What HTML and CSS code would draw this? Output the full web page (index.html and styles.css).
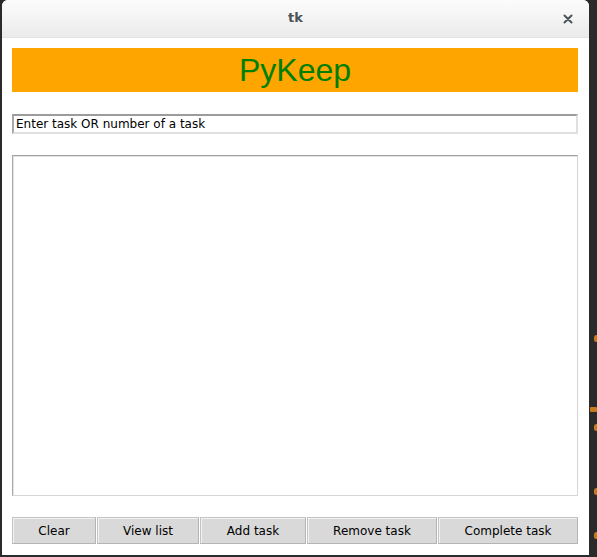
FILE: index.html
```html
<!DOCTYPE html>
<html>
<head>
<meta charset="utf-8">
<link rel="stylesheet" href="styles.css">
</head>
<body>
<div class="desk">
  <div class="window">
    <div class="titlebar">
      <span class="title">tk</span>
      <span class="close">
        <svg width="10" height="10" viewBox="0 0 10 10"><path d="M1.5 1.5 L8.5 8.5 M8.5 1.5 L1.5 8.5" stroke="#4a5559" stroke-width="2" stroke-linecap="round"/></svg>
      </span>
    </div>
    <div class="content">
      <div class="banner">PyKeep</div>
      <div class="entry">Enter task OR number of a task</div>
      <div class="listbox"></div>
      <div class="buttons">
        <div class="btn">Clear</div>
        <div class="btn">View list</div>
        <div class="btn">Add task</div>
        <div class="btn">Remove task</div>
        <div class="btn">Complete task</div>
      </div>
    </div>
  </div>
  <span class="dot d1"></span>
  <span class="dot d2"></span>
  <span class="dot d3"></span>
  <span class="dot d4"></span>
  <span class="dot d5"></span>
</div>
</body>
</html>
```
FILE: styles.css
```css
html, body {
  margin: 0;
  padding: 0;
  background: #2b2b2b;
}
.desk {
  position: relative;
  width: 597px;
  height: 557px;
  overflow: hidden;
  background: #2a2a2a;
}
.window {
  margin-left: 2px;
  width: 587px;
  height: 555px;
  background: #ffffff;
  border-radius: 6px 6px 0 0;
  display: flex;
  flex-direction: column;
}
.titlebar {
  height: 38px;
  box-sizing: border-box;
  background: linear-gradient(#fcfcfc, #ebebeb);
  border-radius: 6px 6px 0 0;
  border-bottom: 1px solid #e2e2e2;
  display: flex;
  align-items: center;
  justify-content: center;
  position: relative;
}
.title {
  font-family: "DejaVu Sans", sans-serif;
  font-weight: bold;
  font-size: 13px;
  color: #4a5458;
  margin-top: -2px;
}
.close {
  position: absolute;
  right: 16px;
  top: 14px;
  width: 10px;
  height: 10px;
  display: block;
}
.close svg { display: block; }
.content {
  padding: 10px 11px 0 10px;
  display: flex;
  flex-direction: column;
}
.banner {
  height: 44px;
  background: #ffa500;
  color: #008000;
  font-family: "Liberation Sans", Arial, sans-serif;
  font-size: 32px;
  line-height: 44px;
  text-align: center;
}
.entry {
  margin-top: 22px;
  height: 20px;
  box-sizing: border-box;
  border: 2px solid;
  border-color: #9c9c9c #e0e0e0 #e0e0e0 #a8a8a8;
  font-family: "DejaVu Sans", sans-serif;
  font-size: 12px;
  line-height: 16px;
  padding-left: 2px;
  color: #000;
}
.listbox {
  margin-top: 21px;
  height: 341px;
  box-sizing: border-box;
  border: 1px solid;
  border-color: #a0a0a0 #d6d6d6 #d6d6d6 #a8a8a8;
  box-shadow: inset 1px 1px 0 #e4e4e4;
}
.buttons {
  margin-top: 21px;
  display: grid;
  grid-template-columns: 84px 102px 106px 130px 140px;
  column-gap: 1px;
}
.btn {
  height: 27px;
  box-sizing: border-box;
  background: #d9d9d9;
  border: 1px solid;
  border-color: #c4c4c4 #b4b4b4 #b4b4b4 #c4c4c4;
  box-shadow: inset 1px 1px 0 #f2f2f2;
  font-family: "DejaVu Sans", sans-serif;
  font-size: 12px;
  line-height: 26px;
  text-align: center;
  color: #000;
}
.dot {
  position: absolute;
  width: 5px;
  height: 7px;
  border-radius: 3px;
  background: #c87a1e;
}
.d1 { left: 594px; top: 335px; }
.d2 { left: 590px; top: 407px; width: 7px; height: 5px; border-radius: 1px; }
.d3 { left: 594px; top: 424px; }
.d4 { left: 594px; top: 488px; }
.d5 { left: 594px; top: 532px; }
```
